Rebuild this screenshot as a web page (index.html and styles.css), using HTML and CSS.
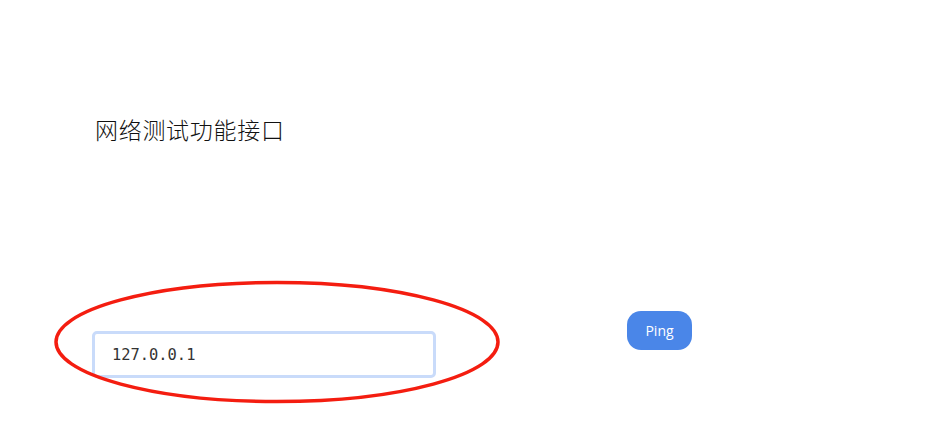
FILE: index.html
```html
<!DOCTYPE html>
<html lang="zh">
<head>
<meta charset="utf-8">
<link rel="stylesheet" href="styles.css">
</head>
<body>
<div class="page">
  <h1 class="title">网络测试功能接口</h1>
  <div class="form-row">
    <div class="field">
      <input class="ip-input" type="text" value="127.0.0.1">
      <svg class="annotation" width="448" height="124" viewBox="0 0 448 124">
        <ellipse cx="224" cy="62" rx="221" ry="59.5" fill="none" stroke="#f41d10" stroke-width="3.5"/>
      </svg>
    </div>
    <button class="ping-btn">Ping</button>
  </div>
</div>
</body>
</html>
```
FILE: styles.css
```css
html, body {
  margin: 0;
  padding: 0;
  background: #fff;
}
.page {
  box-sizing: border-box;
  min-height: 442px;
  padding: 113px 0 0 95px;
}
.title {
  margin: 0;
  font-family: "Noto Sans CJK SC", sans-serif;
  font-weight: 300;
  font-size: 23px;
  line-height: 32px;
  color: #111;
  letter-spacing: 0.7px;
}
.form-row {
  display: flex;
  align-items: flex-start;
  margin-top: 166px;
  margin-left: -3px;
}
.field {
  position: relative;
  margin-top: 20px;
}
.ip-input {
  display: block;
  box-sizing: border-box;
  width: 344px;
  height: 47px;
  border: 3px solid #c9dbfa;
  border-radius: 5px;
  padding: 0 0 0 17px;
  font-family: "DejaVu Sans Mono", monospace;
  font-size: 15.4px;
  color: #333;
  background: #fff;
  outline: none;
}
.annotation {
  position: absolute;
  left: -39px;
  top: -51px;
  pointer-events: none;
}
.ping-btn {
  margin-left: 191px;
  width: 65px;
  height: 39px;
  border: none;
  border-radius: 14px;
  background: #4a86e8;
  color: #fff;
  font-family: "Open Sans", sans-serif;
  font-size: 14px;
  padding: 0;
}
```
